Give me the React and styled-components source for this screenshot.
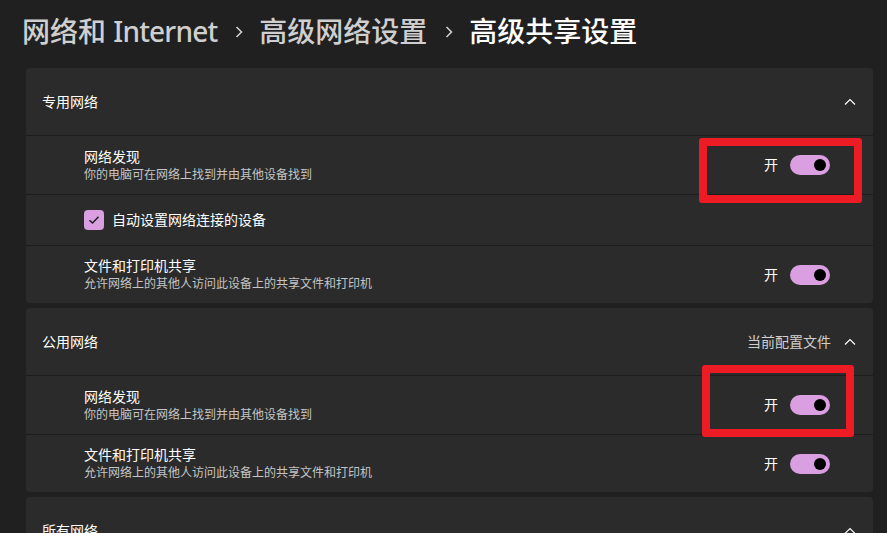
import { styled, createGlobalStyle } from 'styled-components';

const GlobalStyle = createGlobalStyle`
  html, body {
    margin: 0;
    padding: 0;
    background: #202020;
    overflow: hidden;
  }
  body {
    font-family: "Noto Sans", "Noto Sans CJK SC", sans-serif;
    color: #ffffff;
  }
`;

const Page = styled.div`
  position: relative;
  width: 887px;
  height: 533px;
  overflow: hidden;
  box-sizing: border-box;
  padding: 0 14px 0 26px;
`;

const Breadcrumb = styled.div`
  display: flex;
  align-items: center;
  height: 68px;
  margin-left: -4px;
  padding-bottom: 6px;
  box-sizing: border-box;
`;

const Crumb = styled.span`
  font-size: 28px;
  font-weight: 500;
  line-height: 36px;
  color: ${({ current }) => (current ? '#ffffff' : '#cfcfcf')};
`;

const Latin = styled.span`
  letter-spacing: -0.8px;
`;

const CrumbSep = styled.span`
  display: flex;
  margin: 2px 16px 0 18px;
`;

const Card = styled.section`
  background: #2b2b2b;
  border-radius: 4px;
  margin-bottom: 5px;
  overflow: hidden;
`;

const CardHeader = styled.div`
  display: flex;
  align-items: center;
  height: 67px;
  padding: 0 17px 0 16px;
  font-size: 14px;
  line-height: 20px;
  border-bottom: 1px solid #1d1d1d;
`;

const HeaderTitle = styled.span`
  flex: 1;
`;

const HeaderNote = styled.span`
  color: #d0d0d0;
  font-size: 14px;
  margin-right: 13px;
`;

const Row = styled.div`
  display: flex;
  align-items: center;
  height: ${({ h }) => h}px;
  padding: 0 43px 0 58px;
  border-top: ${({ first }) => (first ? 'none' : '1px solid #1d1d1d')};
`;

const RowText = styled.div`
  flex: 1;
  display: flex;
  flex-direction: column;
`;

const RowTitle = styled.span`
  font-size: 14px;
  line-height: 18px;
  color: #ffffff;
`;

const RowDesc = styled.span`
  font-size: 12px;
  line-height: 17px;
  color: #c5c5c5;
`;

const StateLabel = styled.span`
  font-size: 14px;
  line-height: 20px;
  margin-right: 12px;
`;

const Toggle = styled.span`
  position: relative;
  display: inline-block;
  width: 40px;
  height: 20px;
  border-radius: 10px;
  background: #d99fe0;
  &::after {
    content: '';
    position: absolute;
    top: 4px;
    right: 4px;
    width: 12px;
    height: 12px;
    border-radius: 50%;
    background: #000000;
  }
`;

const CheckBox = styled.span`
  display: flex;
  align-items: center;
  justify-content: center;
  width: 20px;
  height: 20px;
  border-radius: 4px;
  background: #d99fe0;
  margin-right: 8px;
`;

const CheckLabel = styled.span`
  font-size: 14px;
  line-height: 20px;
`;

const Highlight = styled.div`
  position: absolute;
  left: ${({ x }) => x}px;
  top: ${({ y }) => y}px;
  width: ${({ w }) => w}px;
  height: ${({ h }) => h}px;
  box-sizing: border-box;
  border: 8px solid #ed1c24;
  border-radius: 3px;
  pointer-events: none;
`;

const ChevronUp = () => (
  <svg width="12" height="8" viewBox="0 0 12 8">
    <polyline points="1,6.5 6,1.5 11,6.5" fill="none" stroke="#ffffff" strokeWidth="1.2" />
  </svg>
);

const ChevronRight = () => (
  <svg width="8" height="12" viewBox="0 0 8 12">
    <polyline points="1.5,1 6.5,6 1.5,11" fill="none" stroke="#cfcfcf" strokeWidth="1.6" />
  </svg>
);

const Check = () => (
  <svg width="12" height="10" viewBox="0 0 12 10">
    <polyline points="1.5,5.2 4.5,8 10.5,1.8" fill="none" stroke="#1b1b1b" strokeWidth="1.4" />
  </svg>
);

const SettingRow = ({ title, desc, h, first }) => (
  <Row h={h} first={first}>
    <RowText>
      <RowTitle>{title}</RowTitle>
      <RowDesc>{desc}</RowDesc>
    </RowText>
    <StateLabel>开</StateLabel>
    <Toggle />
  </Row>
);

export default function App() {
  return (
    <>
      <GlobalStyle />
      <Page>
        <Breadcrumb>
          <Crumb>网络和 <Latin>Internet</Latin></Crumb>
          <CrumbSep><ChevronRight /></CrumbSep>
          <Crumb>高级网络设置</Crumb>
          <CrumbSep><ChevronRight /></CrumbSep>
          <Crumb current>高级共享设置</Crumb>
        </Breadcrumb>

        <Card>
          <CardHeader>
            <HeaderTitle>专用网络</HeaderTitle>
            <ChevronUp />
          </CardHeader>
          <SettingRow first h={58} title="网络发现" desc="你的电脑可在网络上找到并由其他设备找到" />
          <Row h={50}>
            <CheckBox><Check /></CheckBox>
            <CheckLabel>自动设置网络连接的设备</CheckLabel>
          </Row>
          <SettingRow h={57} title="文件和打印机共享" desc="允许网络上的其他人访问此设备上的共享文件和打印机" />
        </Card>

        <Card>
          <CardHeader>
            <HeaderTitle>公用网络</HeaderTitle>
            <HeaderNote>当前配置文件</HeaderNote>
            <ChevronUp />
          </CardHeader>
          <SettingRow first h={58} title="网络发现" desc="你的电脑可在网络上找到并由其他设备找到" />
          <SettingRow h={57} title="文件和打印机共享" desc="允许网络上的其他人访问此设备上的共享文件和打印机" />
        </Card>

        <Card>
          <CardHeader>
            <HeaderTitle>所有网络</HeaderTitle>
            <ChevronUp />
          </CardHeader>
        </Card>

        <Highlight x={699} y={138} w={163} h={65} />
        <Highlight x={702} y={365} w={152} h={72} />
      </Page>
    </>
  );
}
